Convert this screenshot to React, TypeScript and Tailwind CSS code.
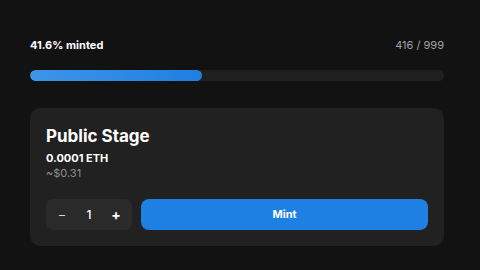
import React from "react";

const App = () => {
  const minted = 416;
  const total = 999;
  const pct = (minted / total) * 100;
  return (
    <div
      className="w-[480px] h-[270px] bg-[#121212] pl-[30px] pr-[36px] pt-[37px] text-white"
      style={{ fontFamily: "Inter, 'Noto Sans', sans-serif" }}
    >
      <div className="flex items-center justify-between text-[11px] leading-4">
        <span className="font-bold">41.6% minted</span>
        <span className="text-[#a3a3a3]">
          {minted} / {total}
        </span>
      </div>
      <div className="mt-[17px] h-[11px] w-full rounded-full bg-[#1f1f1f] overflow-hidden">
        <div
          className="h-full rounded-full bg-gradient-to-r from-[#3d95e8] to-[#1e7fe0]"
          style={{ width: `${pct}%` }}
        />
      </div>
      <div className="mt-[27px] rounded-[10px] bg-[#212121] p-4">
        <h2 className="text-[17px] font-bold leading-6">Public Stage</h2>
        <p className="mt-[3px] text-[11px] font-bold leading-[15px]">0.0001 ETH</p>
        <p className="text-[11px] leading-[14px] text-[#8f8f8f]">~$0.31</p>
        <div className="mt-[19px] flex gap-[9px]">
          <div className="flex h-[31px] w-[86px] items-center justify-between rounded-[7px] bg-[#2a2a2a] px-[8px] text-[12px]">
            <button className="w-4 text-center text-[#d4d4d4]">–</button>
            <span className="font-medium">1</span>
            <button className="w-4 text-center text-[14px] font-bold">+</button>
          </div>
          <button className="flex h-[31px] flex-1 items-center justify-center rounded-[8px] bg-[#1f80e3] text-[11px] font-bold">
            Mint
          </button>
        </div>
      </div>
    </div>
  );
};

export default App;
